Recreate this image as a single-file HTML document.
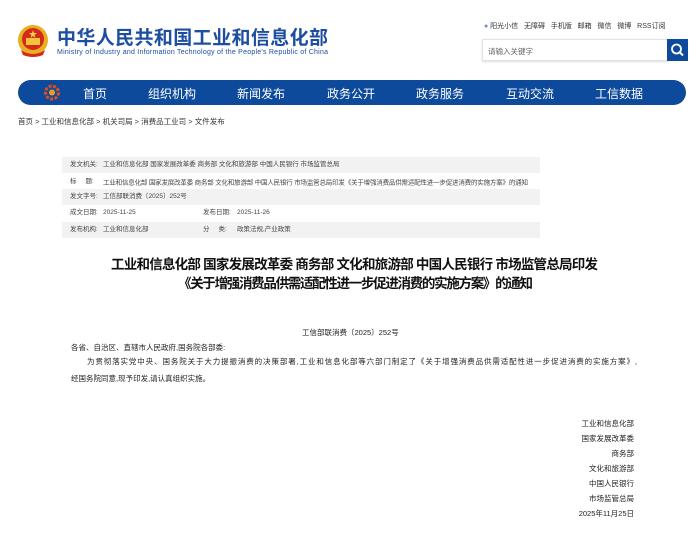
<!DOCTYPE html>
<html><head><meta charset="utf-8"><style>
*{margin:0;padding:0;box-sizing:border-box}
body{width:692px;height:534px;background:#fff;position:relative;overflow:hidden;font-family:"Liberation Sans","Noto Sans CJK SC",sans-serif;color:#333}
.a{position:absolute;white-space:nowrap}
.nav{position:absolute;left:18px;top:80px;width:668px;height:25px;background:#0d4a9b;border-radius:13px}
.nav span{position:absolute;top:5px;color:#fff;font-size:12px;transform:translateX(-50%)}
.row{position:absolute;left:62px;width:478px;height:16px;font-size:6.5px;color:#444;line-height:16px}
.row.g{background:#f2f2f2}
.row span{position:absolute}
.sig{position:absolute;right:58px;font-size:7.5px;color:#222;text-align:right}
</style></head><body>
<svg class="a" style="left:17px;top:24px" width="32" height="34" viewBox="0 0 32 34">
<circle cx="16" cy="16" r="15" fill="#e8b020"/><circle cx="16" cy="15" r="11" fill="#d42a1e"/>
<rect x="9" y="14" width="14" height="7" fill="#f3c43a"/><polygon points="16,6 17,9 20,9 17.5,11 18.5,14 16,12 13.5,14 14.5,11 12,9 15,9" fill="#f7d24a"/>
<path d="M4 26 Q16 34 28 26 L26 31 Q16 35 6 31Z" fill="#d42a1e"/></svg>
<svg class="a" style="left:56px;top:26px" width="275" height="32">
<text x="1" y="18" font-size="19" font-weight="bold" fill="#1d4ea0" textLength="271" font-family="Liberation Sans,Noto Sans CJK SC,sans-serif">中华人民共和国工业和信息化部</text>
<text x="1" y="28" font-size="7" fill="#1d4ea0" textLength="271" font-family="Liberation Sans,sans-serif">Ministry of Industry and Information Technology of the People's Republic of China</text>
</svg>
<div class="a" style="left:484px;top:21px;font-size:7px;color:#333;word-spacing:0">
<span style="color:#6b8fd0">●</span> 阳光小信&nbsp;&nbsp; 无障碍&nbsp;&nbsp; 手机版&nbsp;&nbsp; 邮箱&nbsp;&nbsp; 微信&nbsp;&nbsp; 微博&nbsp;&nbsp; RSS订阅</div>
<div class="a" style="left:482px;top:39px;width:187px;height:22px;border:1px solid #e3e3e3;box-shadow:0 1px 2px #ddd;font-size:7.5px;color:#666;padding:6px 0 0 5px">请输入关键字</div>
<div class="a" style="left:667px;top:39px;width:21px;height:22px;background:#0d4a9b">
<svg width="21" height="22"><circle cx="9.5" cy="10" r="4.5" fill="none" stroke="#fff" stroke-width="1.8"/><line x1="13" y1="13.5" x2="16" y2="16.5" stroke="#fff" stroke-width="2"/></svg></div>
<div class="nav">
<svg style="position:absolute;left:26px;top:4px" width="16" height="17"><circle cx="8" cy="8.5" r="6.5" fill="none" stroke="#e24a1e" stroke-width="3" stroke-dasharray="3 1.5"/><circle cx="8" cy="8.5" r="3" fill="#f59a20"/></svg>
<span style="left:77px">首页</span><span style="left:154px">组织机构</span><span style="left:243px">新闻发布</span><span style="left:333px">政务公开</span><span style="left:422px">政务服务</span><span style="left:512px">互动交流</span><span style="left:601px">工信数据</span>
</div>
<div class="a" style="left:18px;top:116px;font-size:7.5px;color:#333">首页 &gt; 工业和信息化部 &gt; 机关司局 &gt; 消费品工业司 &gt; 文件发布</div>
<div class="row g" style="top:157px"><span style="left:8px">发文机关:</span><span style="left:41px">工业和信息化部 国家发展改革委 商务部 文化和旅游部 中国人民银行 市场监管总局</span></div>
<div class="row" style="top:174px"><span style="left:8px">标&nbsp;&nbsp;&nbsp;&nbsp;&nbsp;题:</span><svg style="position:absolute;left:41px;top:0" width="430" height="16"><text x="0" y="10.5" font-size="6.5" fill="#444" textLength="425" font-family="Liberation Sans,Noto Sans CJK SC,sans-serif">工业和信息化部 国家发展改革委 商务部 文化和旅游部 中国人民银行 市场监管总局印发《关于增强消费品供需适配性进一步促进消费的实施方案》的通知</text></svg></div>
<div class="row g" style="top:189px"><span style="left:8px">发文字号:</span><span style="left:41px">工信部联消费〔2025〕252号</span></div>
<div class="row" style="top:205px"><span style="left:8px">成文日期:</span><span style="left:41px">2025-11-25</span><span style="left:141px">发布日期:</span><span style="left:175px">2025-11-26</span></div>
<div class="row g" style="top:222px"><span style="left:8px">发布机构:</span><span style="left:41px">工业和信息化部</span><span style="left:141px">分&nbsp;&nbsp;&nbsp;&nbsp;&nbsp;类:</span><span style="left:175px">政策法规,产业政策</span></div>
<svg class="a" style="left:100px;top:255px" width="505" height="40">
<text x="11" y="14" font-size="13.5" font-weight="bold" fill="#111" textLength="487" font-family="Liberation Sans,Noto Sans CJK SC,sans-serif">工业和信息化部 国家发展改革委 商务部 文化和旅游部 中国人民银行 市场监管总局印发</text>
<text x="78" y="33" font-size="13.5" font-weight="bold" fill="#111" textLength="355" font-family="Liberation Sans,Noto Sans CJK SC,sans-serif">《关于增强消费品供需适配性进一步促进消费的实施方案》的通知</text>
</svg>
<div class="a" style="left:302px;top:327px;font-size:7.5px;color:#222">工信部联消费〔2025〕252号</div>
<div class="a" style="left:71px;top:342px;font-size:7.5px;color:#222">各省、自治区、直辖市人民政府,国务院各部委:</div>
<svg class="a" style="left:86px;top:354px" width="560" height="14"><text x="1" y="10" font-size="7.5" fill="#222" textLength="550" font-family="Liberation Sans,Noto Sans CJK SC,sans-serif">为贯彻落实党中央、国务院关于大力提振消费的决策部署,工业和信息化部等六部门制定了《关于增强消费品供需适配性进一步促进消费的实施方案》,</text></svg>
<div class="a" style="left:71px;top:373px;font-size:7.5px;color:#222">经国务院同意,现予印发,请认真组织实施。</div>
<div class="sig" style="top:418px">工业和信息化部</div>
<div class="sig" style="top:433px">国家发展改革委</div>
<div class="sig" style="top:448px">商务部</div>
<div class="sig" style="top:463px">文化和旅游部</div>
<div class="sig" style="top:478px">中国人民银行</div>
<div class="sig" style="top:493px">市场监管总局</div>
<div class="sig" style="top:508px">2025年11月25日</div>
</body></html>
